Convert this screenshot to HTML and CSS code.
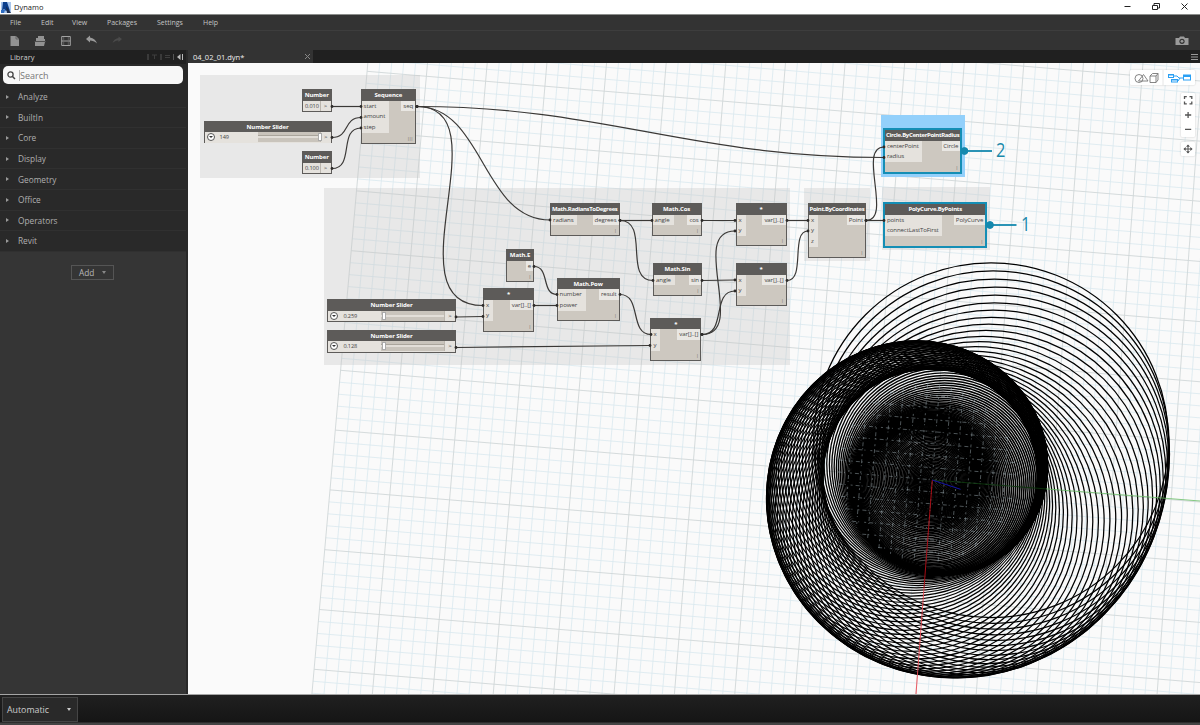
FILE: index.html
```html
<!DOCTYPE html>
<html lang="en">
<head>
<meta charset="utf-8">
<title>Dynamo</title>
<link rel="stylesheet" href="styles.css">
</head>
<body>
<div class="app">
  <header class="titlebar">
    <svg class="logo" width="10" height="11" viewBox="0 0 10 11"><rect width="10" height="11" fill="#a9c6ec"/><path d="M2 0H6L9 9L7 8L5 9L3 7L1 9Z" fill="#0c3f8c"/><path d="M5 4L10 11H6Z" fill="#1b2c4c"/><path d="M0 8L4 8L3 11H0Z" fill="#2e6dc2"/></svg>
    <span class="app-name">Dynamo</span>
    <svg class="win-buttons" width="70" height="12" viewBox="0 0 70 12" fill="none" stroke="#222" stroke-width="1"><path d="M2.500 5.500H8.500"/><path d="M30.500 4.500H35.500V8.500H30.500ZM32 4V2.500H37.500V7H36"/><path d="M59.500 2.500L65.500 8.500M65.500 2.500L59.500 8.500"/></svg>
  </header>
  <nav class="menubar">
    <span class="m1">File</span><span class="m2">Edit</span><span class="m3">View</span><span class="m4">Packages</span><span class="m5">Settings</span><span>Help</span>
  </nav>
  <div class="toolbar">
    <svg width="130" height="14" viewBox="0 0 130 14">
      <path d="M10.500 2H16L19 5V12H10.500Z" fill="#929292"/><path d="M16 2V5H19" stroke="#555" fill="none" stroke-width=".7"/>
      <path d="M38 2H44V5H45V7H36V4H38ZM35 8H45L44 12H35Z" fill="#929292"/><path d="M34.500 7.500H46" stroke="#555" stroke-width=".8"/>
      <path d="M61.700 2.500H70.300V11.500H61.700ZM61.700 7H70.300" fill="none" stroke="#a2a2a2" stroke-width="1"/><path d="M63.700 3V6.500M68.300 3V6.500M63.700 7.500V11M68.300 7.500V11" stroke="#777" stroke-width=".6"/>
      <path d="M86 5L90 1.500V3.600C93.500 4 96 6.500 97 9.500C94.500 7.200 92.500 6.500 90 6.500V8.500Z" fill="#9a9a9a"/>
      <path d="M122 5L118.500 2.500V4C115 4.500 113.500 6.500 112.500 9C115 6.800 116.500 6.500 118.500 6.500V8Z" fill="#4b4b4b"/>
    </svg>
    <svg class="camera" width="14" height="10" viewBox="0 0 14 10"><path d="M.5 2H4L5 .5H9L10 2H13.500V9H.5Z" fill="#9b9b9b"/><circle cx="7" cy="5.300" r="2.600" fill="#333"/><circle cx="7" cy="5.300" r="1.400" fill="#9b9b9b"/></svg>
  </div>
  <main class="main">
    <aside class="sidebar">
      <div class="lib-head"><span>Library</span>
        <svg width="38" height="8" viewBox="0 0 38 8"><path d="M1 1V7M14 1V7M26.500 1V7" stroke="#555"/><path d="M5 2H10M7.500 2V6M18 2.500H23M18 4.500H23" stroke="#3e3e3e"/><path d="M33.500 1V7L30 4Z" fill="#bbb"/><path d="M35.500 1V7" stroke="#bbb"/></svg>
      </div>
      <div class="cats">
        <div class="search">
          <svg width="9" height="9" viewBox="0 0 9 9" fill="none" stroke="#444"><circle cx="3.500" cy="3.500" r="2.600" stroke-width="1.300"/><path d="M5.500 5.500L8 8" stroke-width="1.500"/></svg>
          <span>Search</span>
        </div>
        <div class="cat">Analyze</div><div class="cat">BuiltIn</div><div class="cat">Core</div><div class="cat">Display</div><div class="cat">Geometry</div><div class="cat">Office</div><div class="cat">Operators</div><div class="cat">Revit</div>
      </div>
      <div class="add">Add<i></i></div>
    </aside>
    <section class="workspace">
      <div class="tabs">
        <div class="tab"><span>04_02_01.dyn*</span><svg width="7" height="7" viewBox="0 0 7 7"><path d="M1 1L6 6M6 1L1 6" stroke="#888"/></svg></div>
        <svg class="burger" width="7" height="8" viewBox="0 0 7 8"><path d="M0 1.500H7M0 4H7M0 6.500H7" stroke="#999"/></svg>
      </div>
      <div class="canvas">
        <svg class="layer" viewBox="188 63 1012 631">
          <g id="grid"></g>
          <g id="circles" fill="none" stroke="#000"></g>
          <g id="ghost" fill="none"></g>
          <path d="M932.300 480L1046 488.900" stroke="#0b360b" stroke-width=".9"/><path d="M1046 488.900L1200 501" stroke="#67bd63" stroke-width=".8"/>
          <path d="M932.300 480L924 588" stroke="#a80c14"/><path d="M924 588L916 694" stroke="#ee4b55" stroke-width=".9"/>
          <path d="M932.300 480L960.500 489.300" stroke="#1414a8"/>
        </svg>
        <div class="group" style="left:12px;top:12px;width:220px;height:103px"></div>
        <div class="group" style="left:136px;top:125px;width:466px;height:177px"></div>
        <div class="group" style="left:616px;top:125px;width:66px;height:73px"></div>
        <div class="group" style="left:694px;top:124px;width:108px;height:63px"></div>
        <div class="group blue" style="left:693px;top:52px;width:84px;height:62px"></div>

        <div class="node value" style="left:114px;top:26px;width:29.500px;height:22.500px"><h3>Number</h3><div class="row"><b>0.010</b><em>&gt;</em></div></div>
        <div class="node value" style="left:114px;top:88px;width:29.500px;height:22.500px"><h3>Number</h3><div class="row"><b>0.100</b><em>&gt;</em></div></div>
        <div class="node slider" style="left:15.600px;top:57.500px;width:128px;height:22.500px"><h3>Number Slider</h3><div class="row"><i class="knob"></i><b>149</b><u><s style="left:60px"></s></u><em>&gt;</em></div></div>
        <div class="node slider" style="left:139.400px;top:236px;width:128.500px;height:23px"><h3>Number Slider</h3><div class="row"><i class="knob"></i><b>0.259</b><u><s></s></u><em>&gt;</em></div></div>
        <div class="node slider" style="left:139.400px;top:266.500px;width:128.500px;height:23px"><h3>Number Slider</h3><div class="row"><i class="knob"></i><b>0.128</b><u><s></s></u><em>&gt;</em></div></div>

        <div class="node" style="left:172.600px;top:26px;width:55.500px;height:54.500px"><h3>Sequence</h3><div class="ports"><div class="in"><p>start</p><p>amount</p><p>step</p></div><div class="out"><p>seq</p></div></div><i class="lace">III</i></div>
        <div class="node" style="left:318px;top:186px;width:28px;height:33px"><h3>Math.E</h3><div class="ports"><div></div><div class="out"><p>e</p></div></div><i class="lace">I</i></div>
        <div class="node" style="left:295px;top:225px;width:51px;height:44px"><h3>*</h3><div class="ports"><div class="in"><p>x</p><p>y</p></div><div class="out"><p>var[]..[]</p></div></div><i class="lace">I</i></div>
        <div class="node" style="left:362px;top:140px;width:69.500px;height:33px"><h3 class="tight">Math.RadiansToDegrees</h3><div class="ports"><div class="in"><p>radians</p></div><div class="out"><p>degrees</p></div></div><i class="lace">I</i></div>
        <div class="node" style="left:368.600px;top:214.500px;width:63px;height:43.500px"><h3>Math.Pow</h3><div class="ports"><div class="in"><p>number</p><p>power</p></div><div class="out"><p>result</p></div></div><i class="lace">I</i></div>
        <div class="node" style="left:463.600px;top:140px;width:50px;height:33px"><h3>Math.Cos</h3><div class="ports"><div class="in"><p>angle</p></div><div class="out"><p>cos</p></div></div><i class="lace">I</i></div>
        <div class="node" style="left:465px;top:200px;width:49px;height:33px"><h3>Math.Sin</h3><div class="ports"><div class="in"><p>angle</p></div><div class="out"><p>sin</p></div></div><i class="lace">I</i></div>
        <div class="node" style="left:462.400px;top:254.500px;width:51px;height:43.500px"><h3>*</h3><div class="ports"><div class="in"><p>x</p><p>y</p></div><div class="out"><p>var[]..[]</p></div></div><i class="lace">I</i></div>
        <div class="node" style="left:547.600px;top:140px;width:51px;height:43px"><h3>*</h3><div class="ports"><div class="in"><p>x</p><p>y</p></div><div class="out"><p>var[]..[]</p></div></div><i class="lace">I</i></div>
        <div class="node" style="left:547.600px;top:200px;width:51px;height:43px"><h3>*</h3><div class="ports"><div class="in"><p>x</p><p>y</p></div><div class="out"><p>var[]..[]</p></div></div><i class="lace">I</i></div>
        <div class="node" style="left:620px;top:140px;width:58px;height:54.500px"><h3 class="tight">Point.ByCoordinates</h3><div class="ports"><div class="in"><p>x</p><p>y</p><p>z</p></div><div class="out"><p>Point</p></div></div><i class="lace">I</i></div>
        <div class="node selected" style="left:695.400px;top:65px;width:78.500px;height:46px"><h3 class="tight">Circle.ByCenterPointRadius</h3><div class="ports"><div class="in"><p>centerPoint</p><p>radius</p></div><div class="out"><p>Circle</p></div></div><i class="lace">I</i></div>
        <div class="node selected" style="left:695.400px;top:139px;width:103.500px;height:46px"><h3 class="snug">PolyCurve.ByPoints</h3><div class="ports"><div class="in"><p>points</p><p>connectLastToFirst</p></div><div class="out"><p>PolyCurve</p></div></div><i class="lace">I</i></div>

        <svg class="layer" viewBox="188 63 1012 631">
          <g id="wires" fill="none" stroke="#3a3836" stroke-width="1.200">
            <path d="M332 106.500H361"/>
            <path d="M332 137.500C350 137.500 343 117.500 361 117.500"/>
            <path d="M332 168.500C355 168.500 338 128 361 128"/>
            <path d="M417 106.500C604 106.500 690 157.500 884 157.500"/>
            <path d="M417 106.500C484 106.500 482 220 550 220"/>
            <path d="M417 106.500C505 106.500 388 305.500 483 305.500"/>
            <path d="M456 317L483 316.500"/>
            <path d="M456 347.500L650 345.500"/>
            <path d="M534 266.500C550 266.500 541 294.500 557 294.500"/>
            <path d="M534 305.500H557"/>
            <path d="M620 294.500C642 294.500 629 334.500 651 334.500"/>
            <path d="M620 220.500H652"/>
            <path d="M620 220.500C650 220.500 623 280.500 653 280.500"/>
            <path d="M702 220.500H735"/>
            <path d="M702 280.500L735 280"/>
            <path d="M702 334.500C748 334.500 688 231 735 231"/>
            <path d="M702 334.500C727 334.500 711 291 735 291"/>
            <path d="M787 220.500H808"/>
            <path d="M787 280.500C806 280.500 790 231 808 231"/>
            <path d="M866 220.500H884"/>
            <path d="M866 220.500C893 220.500 857 147 884 147"/>
          </g>
          <g id="ends" fill="#2d2b2a"></g>
          <g fill="#1488ae" stroke="#1488ae"><circle cx="964.500" cy="151" r="3.400"/><path d="M965 151H992" stroke-width="1.800"/><circle cx="990" cy="225" r="3.400"/><path d="M990 225H1016.500" stroke-width="1.800"/></g>
        </svg>
        <span class="callout" style="left:808px;top:73px">2</span>
        <span class="callout" style="left:833px;top:147px">1</span>

        <div class="view-switch">
          <svg width="64" height="16" viewBox="0 0 64 16" fill="none">
            <g stroke="#777" stroke-width=".9"><circle cx="9" cy="8.500" r="4"/><path d="M8.500 11L13.500 4.500L18 11Z"/><path d="M20 6H26V12.500H20ZM20 6L22.500 3.500H28V10L26 12.500M26 6L28 3.500"/></g>
            <path d="M33 0V16" stroke="#e6e6e6"/>
            <g stroke="#2aa0f4"><rect x="38.500" y="4.500" width="5" height="3"/><rect x="41.500" y="9.500" width="6" height="2.500"/><rect x="53.500" y="5" width="7" height="5"/><path d="M44 6H47L49 8H53M48 11L50 8"/></g><path d="M53 5H61V7H53ZM38 4H44V5.500H38ZM41 9H48V10.500H41Z" fill="#2aa0f4"/>
          </svg>
        </div>
        <div class="zoom-box">
          <svg width="14" height="45" viewBox="0 0 14 45" fill="none" stroke="#555" stroke-width="1.300"><path d="M3.500 6V3.700H5.800M8.500 3.700H10.800V6M10.800 8.500V10.800H8.500M5.800 10.800H3.500V8.500M4 22H10.200M7.100 19V25M4 36.300H10.200"/></svg>
        </div>
        <div class="pan-box">
          <svg width="14" height="14" viewBox="0 0 14 14"><path d="M7 3V11M3 7H11" stroke="#555"/><path d="M7 2.400L9 4.700H5ZM7 11.600L5 9.300H9ZM2.400 7L4.700 5V9ZM11.600 7L9.300 9V5Z" fill="#555"/></svg>
        </div>
      </div>
    </section>
  </main>
  <footer class="statusbar"><div class="run-mode">Automatic<i></i></div></footer>
</div>
<script src="app.js"></script>
</body>
</html>
```

FILE: styles.css
```css
* { box-sizing: border-box; }
body { margin: 0; font-family: "Open Sans", "Noto Sans", sans-serif; }
.app { width: 1200px; height: 725px; display: flex; flex-direction: column; background: #333; overflow: hidden; }
.titlebar { height: 15px; background: #fff; display: flex; align-items: center; padding: 0 8px 0 1px; border-bottom: 1px solid #8b8d8b; flex: none; }
.app-name { font-size: 7.500px; line-height: 12px; color: #222; margin-left: 3px; }
.win-buttons { margin-left: auto; }
.menubar { height: 16px; flex: none; display: flex; align-items: center; padding-left: 10px; font-size: 7px; color: #c4c4c4; border-bottom: 1px solid #3d3d3d; }
.m1 { width: 31px; } .m2 { width: 31px; } .m3 { width: 35px; } .m4 { width: 50px; } .m5 { width: 46px; }
.toolbar { height: 19px; flex: none; display: flex; align-items: center; justify-content: space-between; padding-right: 11px; }
.main { height: 645px; flex: none; display: flex; border-bottom: 1px solid #a5a5a5; }
.sidebar { width: 188px; background: #353535; border-right: 2px solid #292929; display: flex; flex-direction: column; }
.lib-head { height: 14px; flex: none; background: #202020; display: flex; align-items: center; justify-content: space-between; padding: 0 1px 0 10px; color: #ccc; font-size: 7.500px; }
.cats { background: #292929; padding-top: 2px; }
.search { height: 18px; margin: 0 3px 3px; border-radius: 5px; background: #f7f7f7; display: flex; align-items: center; padding-left: 4px; font-size: 9px; color: #777; }
.search span { margin-left: 3px; border-left: 1px solid #b5b5b5; line-height: 11px; }
.cat { height: 20.600px; display: flex; align-items: center; font-size: 8.300px; color: #b0b0b0; border-bottom: 1px solid #303030; padding-left: 6px; }
.cat::before { content: ""; border-left: 3px solid #999; border-top: 2px solid transparent; border-bottom: 2px solid transparent; margin-right: 9px; }
.add { width: 43px; height: 15px; border: 1px solid #555; margin: 13px 0 0 71px; padding-left: 7px; font-size: 8.300px; color: #b8b8b8; display: flex; align-items: center; gap: 8px; }
.add i { border-top: 3px solid #888; border-left: 2px solid transparent; border-right: 2px solid transparent; }
.workspace { flex: 1; display: flex; flex-direction: column; }
.tabs { height: 13px; flex: none; background: #202020; display: flex; justify-content: space-between; align-items: center; padding-right: 2px; }
.tab { width: 125px; height: 13px; background: #333; display: flex; align-items: center; justify-content: space-between; padding: 0 2px 0 5px; color: #eee; font-size: 7.500px; line-height: 12px; }
.canvas { position: relative; flex: 1; background: #fafafa; overflow: hidden; }
.layer { position: absolute; left: 0; top: 0; width: 1012px; height: 631px; }
.group { position: absolute; background: rgba(198, 198, 198, .35); }
.group.blue { background: #93d0fb; }
.node { position: absolute; background: #cdc8c0; border: 1px solid #5d5b59; border-top: 0; color: #444; font-size: 6.100px; letter-spacing: -.1px; }
.node h3 { margin: 0 -1px; height: 11.500px; line-height: 13px; background: #5d5b59; color: #fff; font-size: 6px; font-weight: 700; text-align: center; white-space: nowrap; letter-spacing: -.1px; }
.ports { display: flex; justify-content: space-between; align-items: flex-start; }
.ports p { margin: 0; height: 10.900px; line-height: 10.900px; padding: 0 2px; }
.in { background: #e5e2dd; padding-right: 2px; }
.out { background: #e9e7e3; }
.lace { position: absolute; right: 2px; bottom: 1px; font-size: 4.500px; line-height: 6px; color: #77736e; font-style: normal; letter-spacing: .5px; }
.selected { border: 2px solid #148eb5; }
.selected .ports p { padding: 0 1.500px; }
.node.selected h3 { margin: 0; height: 10.500px; line-height: 11px; }
.node h3.tight { letter-spacing: -.34px; }
.node h3.snug { letter-spacing: -.26px; }
.row { display: flex; height: 10.500px; align-items: center; background: #e5e2dd; font-size: 5.600px; }
.row b { font-weight: 400; flex: 1; padding-left: 2px; }
.row em { font-style: normal; font-size: 6px; color: #333; width: 11px; text-align: center; border-left: 1px solid #bbb6ae; line-height: 10px; flex: none; }
.slider .row b { flex: none; width: 43px; padding-left: 5px; }
.knob { width: 8px; height: 8px; margin-left: 2px; border: 1px solid #555; border-radius: 50%; background: #fff; display: flex; justify-content: center; align-items: center; flex: none; }
.knob::before { content: ""; border-top: 2.500px solid #333; border-left: 2px solid transparent; border-right: 2px solid transparent; }
.slider u { flex: 1; height: 10px; background: linear-gradient(#c9c4bc 3.500px, #aaa59c 3.500px, #e2ded8 4.500px, #e2ded8 6px, #c9c4bc 6px); position: relative; text-decoration: none; }
.slider s { position: absolute; left: 1px; top: 1px; width: 4px; height: 8px; background: #fff; border: .5px solid #aaa; }
.callout { position: absolute; color: #1988aa; font-size: 20px; line-height: 28px; transform: scaleX(.82); transform-origin: left; }
.view-switch, .zoom-box, .pan-box { position: absolute; background: #fff; box-shadow: 0 0 2px rgba(0, 0, 0, .22); border-radius: 1px; display: flex; }
.view-switch { left: 942px; top: 7px; width: 65px; height: 15px; }
.zoom-box { left: 993px; top: 30px; width: 14px; height: 44px; }
.pan-box { left: 993px; top: 79px; width: 14px; height: 14px; }
.statusbar { height: 30px; flex: none; background: linear-gradient(#202020, #151515 27px, #444 28px); padding: 2px 0 0 2px; }
.run-mode { width: 76px; height: 25px; border: 1px solid #454545; background: #292929; color: #ccc; font-size: 8.800px; display: flex; justify-content: space-between; align-items: center; padding: 0 6px 0 4px; }
.run-mode i { border-top: 3px solid #ccc; border-left: 2.500px solid transparent; border-right: 2.500px solid transparent; }
```

FILE: app.js
```js
const NS = "http://www.w3.org/2000/svg";
const add = (parent, tag, attrs) => {
  const el = document.createElementNS(NS, tag);
  for (const k in attrs) el.setAttribute(k, attrs[k]);
  parent.appendChild(el);
};
const byId = (id) => document.getElementById(id);

// ground plane: u runs along the green axis, v along the red one, 5 minor cells per unit
const project = (u, v) => [932.3 + 59.7 * u - 4.59 * v + 0.071 * u * v, 479.8 + 4.97 * u + 59.8 * v];
const line = (a, b) => "M" + project(...a) + "L" + project(...b);

let minor = "", major = "";
for (let i = -50; i <= 50; i++) {
  const k = i / 5;
  const d = line([k, -10], [k, 10]) + line([-10, k], [10, k]);
  if (i % 5) minor += d; else major += d;
}
add(byId("grid"), "path", { d: minor, stroke: "#d9e9ef", "stroke-width": 0.8 });
add(byId("grid"), "path", { d: major, stroke: "#d0d7d8", "stroke-width": 0.9 });

// circles whose centres follow a logarithmic spiral and whose radius is the sequence value
const spiral = [];
for (let i = 0; i < 149; i++) {
  const t = 0.01 + 0.1 * i;
  const k = 0.128 * Math.exp(0.259 * t) / 5;
  const [x, y] = project(k * Math.sin(t), k * Math.cos(t));
  spiral.push(x.toFixed(2) + " " + y.toFixed(2));
  const weight = i < 70 ? 1.65 : Math.max(1.25, 1.65 - (i - 70) * 0.016);
  add(byId("circles"), "circle", { cx: x, cy: y, r: t * 11.98, "stroke-width": weight });
}
add(byId("circles"), "path", { d: "M" + spiral.join("L"), "stroke-dasharray": "3 2" });

// grid lines that show through the dense middle
let faint = "";
for (let i = -7; i <= 6; i++) {
  const k = i / 5, s = Math.sqrt(Math.max(0, 2.2 - (k + 0.1) ** 2));
  faint += line([k, -0.1 - s], [k, -0.1 + s]) + line([-0.1 - s, k], [-0.1 + s, k]);
}
add(byId("ghost"), "path", { d: faint, stroke: "#b9cbd1", "stroke-width": 0.7, "stroke-dasharray": "4 2 1 5 2 3", opacity: 0.6 });

for (const w of document.querySelectorAll("#wires path")) {
  const n = w.getTotalLength();
  for (const at of [0, n]) {
    const p = w.getPointAtLength(at);
    add(byId("ends"), "circle", { cx: p.x, cy: p.y, r: 1.4 });
  }
}
```
